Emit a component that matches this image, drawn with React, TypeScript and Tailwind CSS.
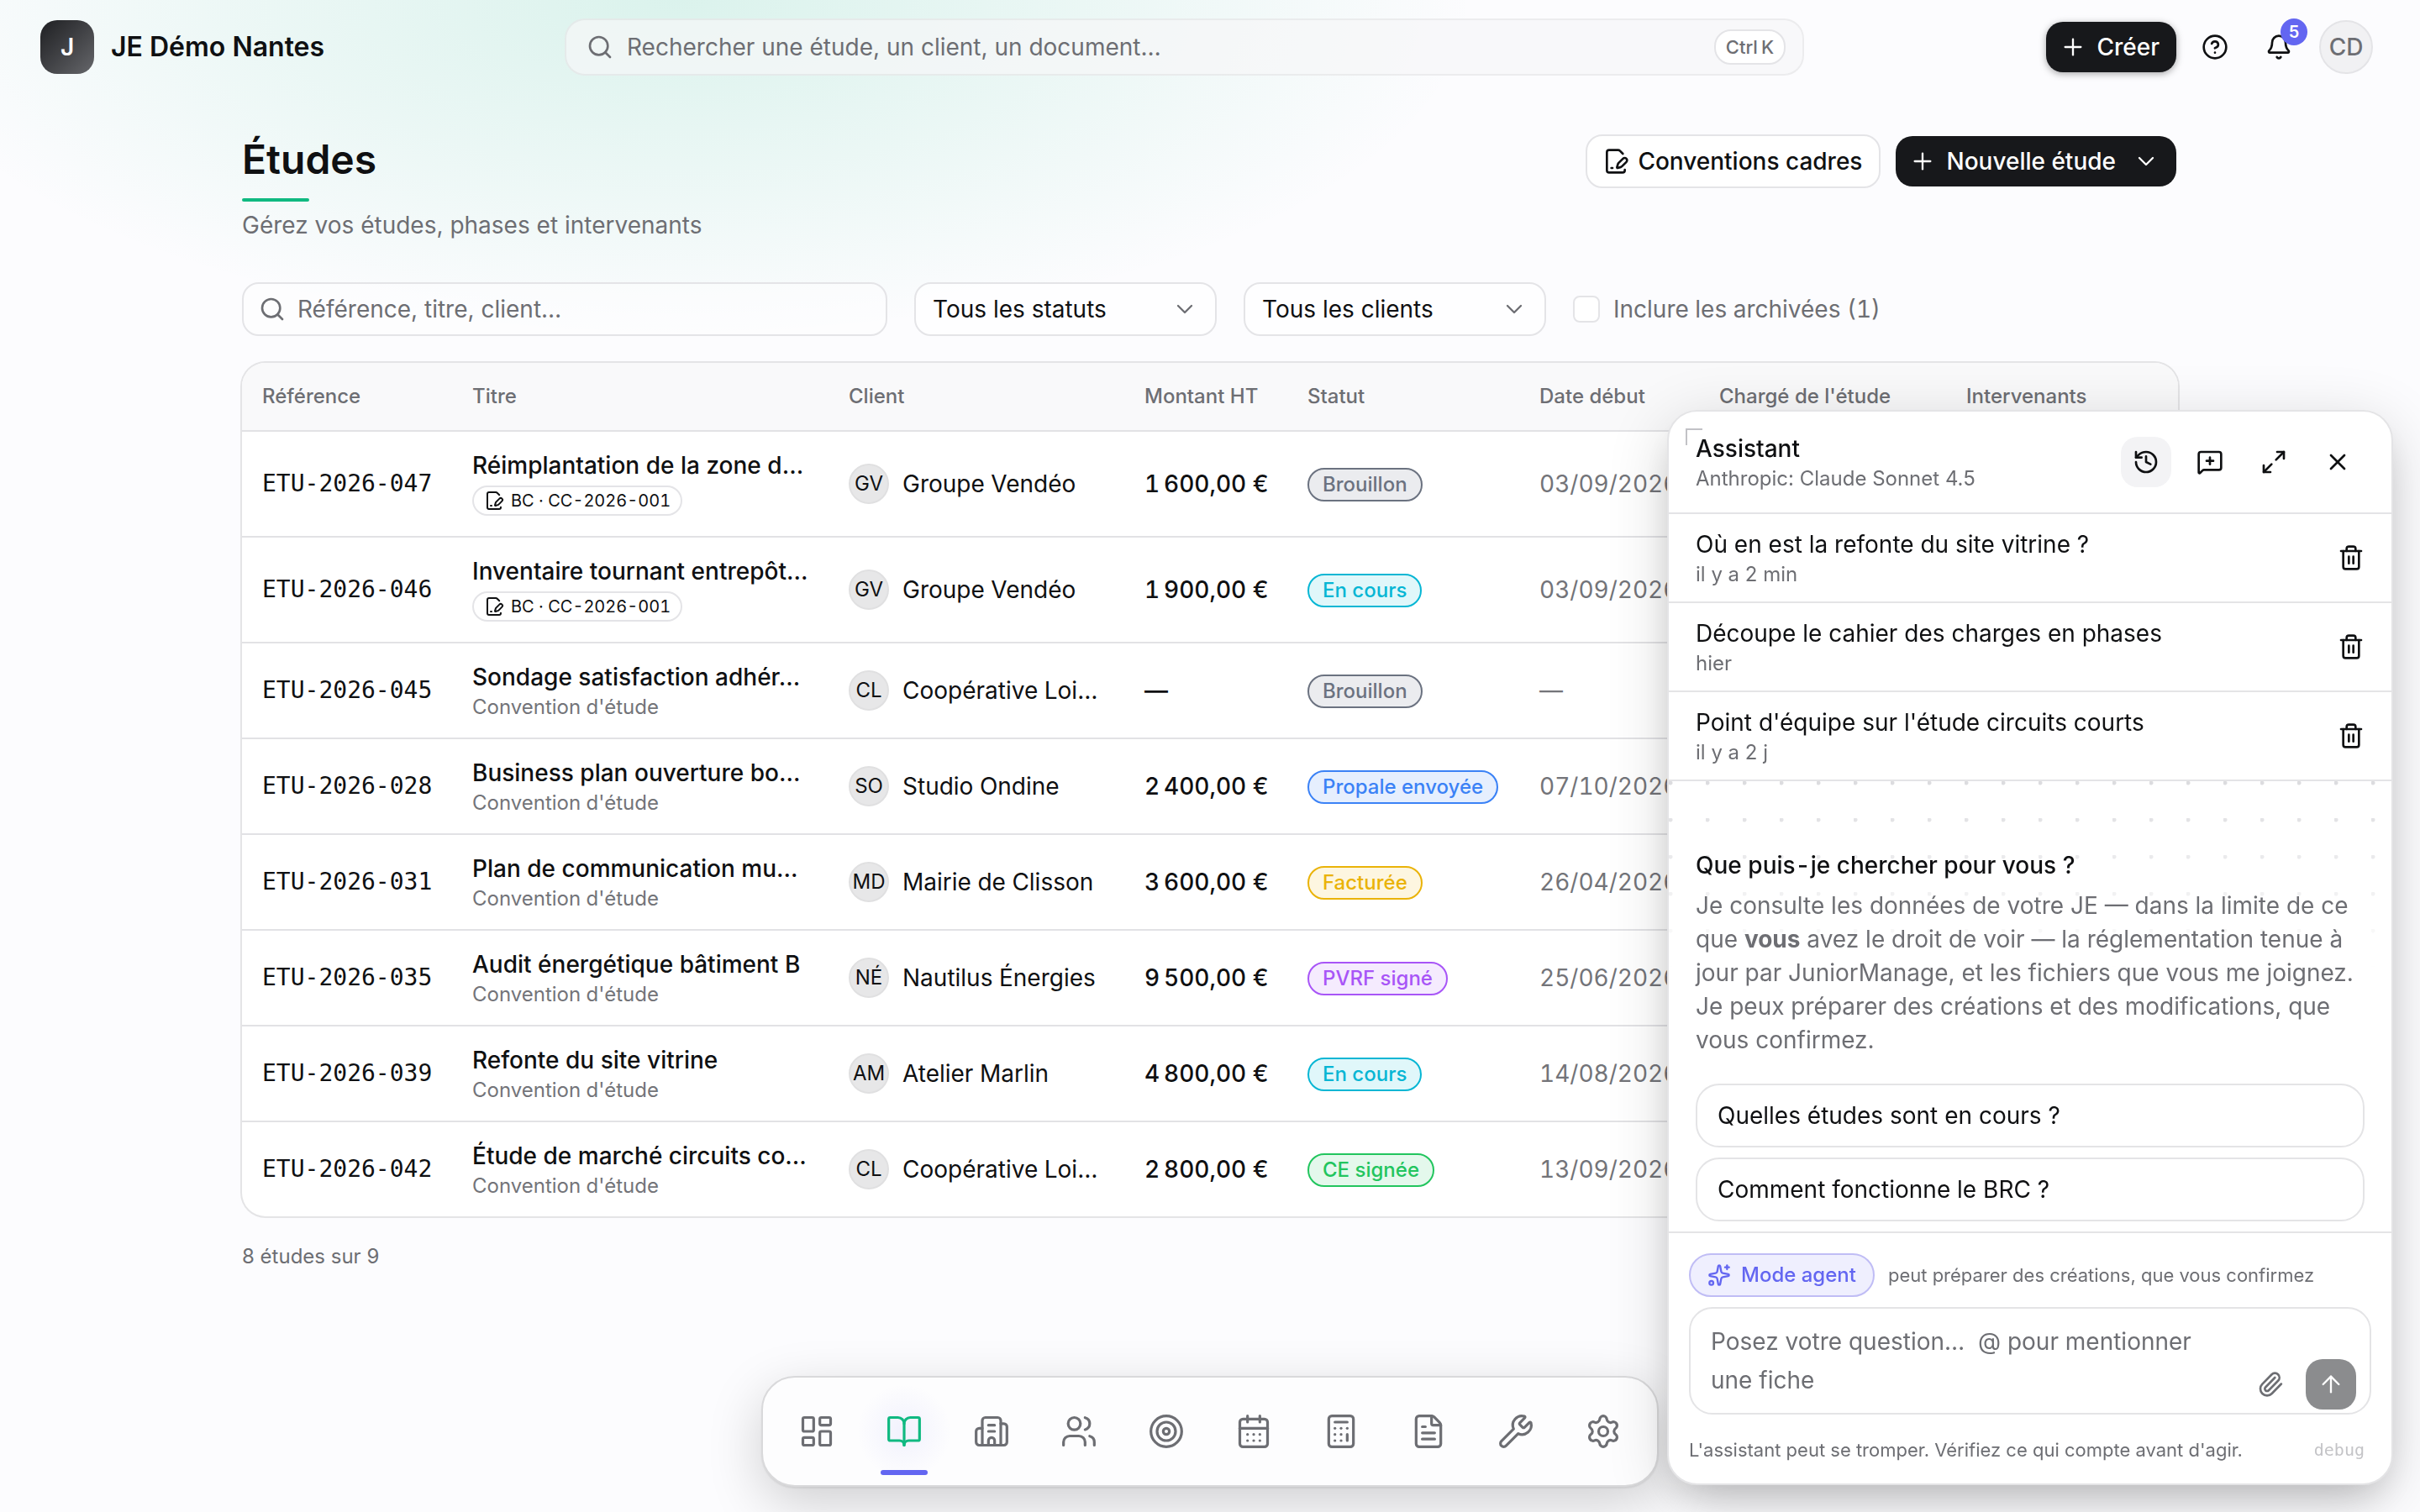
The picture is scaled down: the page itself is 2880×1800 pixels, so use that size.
import { useState } from "react";
import type { ComponentType, ReactNode } from "react";
import {
  ArrowUp,
  Bell,
  BookOpen,
  Building2,
  Calculator,
  CalendarDays,
  ChevronDown,
  CircleQuestionMark,
  FileSignature,
  FileText,
  History,
  LayoutDashboard,
  Maximize2,
  MessageSquarePlus,
  Paperclip,
  Plus,
  Search,
  Settings,
  Sparkles,
  Target,
  Trash2,
  Users,
  Wrench,
  X,
} from "lucide-react";

type Status = "Brouillon" | "En cours" | "Propale envoyée" | "Facturée" | "PVRF signé" | "CE signée";

type Study = {
  ref: string;
  title: string;
  bc?: string;
  initials: string;
  client: string;
  amount: string;
  status: Status;
  date: string;
};

const STATUS_STYLES: Record<Status, string> = {
  Brouillon: "border-[#6b7280] bg-[#ebecef] text-[#6b7280]",
  "En cours": "border-[#06b6d4] bg-[#e0f7fa] text-[#06b6d4]",
  "Propale envoyée": "border-[#3b82f6] bg-[#e6effe] text-[#3b82f6]",
  Facturée: "border-[#eab308] bg-[#fdf6e0] text-[#eab308]",
  "PVRF signé": "border-[#a855f7] bg-[#f5ebfe] text-[#a855f7]",
  "CE signée": "border-[#22c55e] bg-[#e4f8ec] text-[#22c55e]",
};

const STUDIES: Study[] = [
  { ref: "ETU-2026-047", title: "Réimplantation de la zone d…", bc: "BC · CC-2026-001", initials: "GV", client: "Groupe Vendéo", amount: "1\u202f600,00 €", status: "Brouillon", date: "03/09/2026" },
  { ref: "ETU-2026-046", title: "Inventaire tournant entrepôt…", bc: "BC · CC-2026-001", initials: "GV", client: "Groupe Vendéo", amount: "1\u202f900,00 €", status: "En cours", date: "03/09/2026" },
  { ref: "ETU-2026-045", title: "Sondage satisfaction adhér…", initials: "CL", client: "Coopérative Loi…", amount: "—", status: "Brouillon", date: "—" },
  { ref: "ETU-2026-028", title: "Business plan ouverture bo…", initials: "SO", client: "Studio Ondine", amount: "2\u202f400,00 €", status: "Propale envoyée", date: "07/10/2026" },
  { ref: "ETU-2026-031", title: "Plan de communication mu…", initials: "MD", client: "Mairie de Clisson", amount: "3\u202f600,00 €", status: "Facturée", date: "26/04/2026" },
  { ref: "ETU-2026-035", title: "Audit énergétique bâtiment B", initials: "NÉ", client: "Nautilus Énergies", amount: "9\u202f500,00 €", status: "PVRF signé", date: "25/06/2026" },
  { ref: "ETU-2026-039", title: "Refonte du site vitrine", initials: "AM", client: "Atelier Marlin", amount: "4\u202f800,00 €", status: "En cours", date: "14/08/2026" },
  { ref: "ETU-2026-042", title: "Étude de marché circuits co…", initials: "CL", client: "Coopérative Loi…", amount: "2\u202f800,00 €", status: "CE signée", date: "13/09/2026" },
];

const COLUMNS = [
  { label: "Référence", width: "w-[250px]" },
  { label: "Titre", width: "w-[448px]" },
  { label: "Client", width: "w-[352px]" },
  { label: "Montant HT", width: "w-[194px]" },
  { label: "Statut", width: "w-[276px]" },
  { label: "Date début", width: "w-[214px]" },
  { label: "Chargé de l'étude", width: "w-[294px]" },
  { label: "Intervenants", width: "w-[276px]" },
];

const CONVERSATIONS = [
  { title: "Où en est la refonte du site vitrine ?", when: "il y a 2 min" },
  { title: "Découpe le cahier des charges en phases", when: "hier" },
  { title: "Point d'équipe sur l'étude circuits courts", when: "il y a 2 j" },
];

const SUGGESTIONS = ["Quelles études sont en cours ?", "Comment fonctionne le BRC ?"];

const DOCK: { label: string; icon: ComponentType<{ className?: string; strokeWidth?: number }> }[] = [
  { label: "Tableau de bord", icon: LayoutDashboard },
  { label: "Études", icon: BookOpen },
  { label: "Clients", icon: Building2 },
  { label: "Membres", icon: Users },
  { label: "Prospection", icon: Target },
  { label: "Calendrier", icon: CalendarDays },
  { label: "Comptabilité", icon: Calculator },
  { label: "Documents", icon: FileText },
  { label: "Outils", icon: Wrench },
  { label: "Paramètres", icon: Settings },
];

const TopBar = () => (
  <header className="relative flex h-28 items-center pr-14 pl-12">
    <div className="flex w-[624px] shrink-0 items-center gap-5">
      <div className="flex size-16 items-center justify-center rounded-[20px] bg-gradient-to-br from-[#1f2023] to-[#66676b] text-[28px] font-semibold text-white">
        J
      </div>
      <span className="text-[32px] leading-10 font-semibold">JE Démo Nantes</span>
    </div>

    <label className="flex h-[68px] flex-1 items-center gap-4 rounded-[24px] border-2 border-black/5 bg-[#f6f6f8]/70 pr-5 pl-6 text-[#6d6e73]">
      <Search className="size-8 shrink-0" />
      <input
        type="search"
        aria-label="Rechercher"
        placeholder="Rechercher une étude, un client, un document…"
        className="h-10 min-w-0 flex-1 bg-transparent text-[28px] outline-none placeholder:text-[#6d6e73]"
      />
      <kbd className="flex h-[42px] items-center gap-1 rounded-[20px] border-2 border-[#e4e4e7] bg-white px-3 font-[Inter,sans-serif] text-[22px] font-medium">
        <span>Ctrl</span>
        <span>K</span>
      </kbd>
    </label>

    <div className="flex w-[677px] shrink-0 items-center justify-end gap-3">
      <button type="button" className="flex h-[60px] items-center gap-3 rounded-[20px] bg-[#17181b] pr-5 pl-4 text-[28px] font-medium text-white shadow-[0_2px_8px_rgba(0,0,0,0.35)]">
        <Plus className="size-8" strokeWidth={1.75} />
        Créer
      </button>
      <button type="button" aria-label="Aide" className="ml-0.5 flex size-16 items-center justify-center">
        <CircleQuestionMark className="size-8" />
      </button>
      <button type="button" aria-label="Notifications" className="relative flex size-16 items-center justify-center">
        <Bell className="size-8" />
        <span className="absolute -top-0.5 -right-0.5 flex size-8 items-center justify-center rounded-full bg-[#6366f1] text-xl font-semibold text-white">
          5
        </span>
      </button>
      <button type="button" aria-label="Mon compte" className="ml-1 flex size-16 items-center justify-center rounded-full border-2 border-[#e4e4e7] bg-[#f1f1f3] text-[28px] font-medium text-[#6d6e73]">
        CD
      </button>
    </div>
  </header>
);

const FilterSelect = ({ label, value }: { label: string; value: string }) => (
  <div className="relative w-[360px]">
    <select
      aria-label={label}
      className="h-16 w-full appearance-none rounded-[20px] border-2 border-[#e4e4e7] bg-white/70 pr-16 pl-5 text-[28px] outline-none"
    >
      <option>{value}</option>
    </select>
    <ChevronDown className="pointer-events-none absolute top-4 right-[22px] size-8 text-[#6d6e73]" strokeWidth={1.75} />
  </div>
);

const Filters = () => (
  <div className="mt-12 flex items-center gap-8">
    <label className="flex h-16 w-[768px] items-center gap-3.5 rounded-[20px] border-2 border-[#e4e4e7] bg-white/40 px-[18px] text-[#6d6e73]">
      <Search className="size-8 shrink-0" />
      <input
        type="search"
        aria-label="Filtrer les études"
        placeholder="Référence, titre, client…"
        className="h-10 min-w-0 flex-1 bg-transparent text-[28px] outline-none placeholder:text-[#6d6e73]"
      />
    </label>
    <FilterSelect label="Statut" value="Tous les statuts" />
    <FilterSelect label="Client" value="Tous les clients" />
    <label className="flex items-center gap-4 text-[28px] leading-10 text-[#6d6e73] tabular-nums">
      <input type="checkbox" className="size-8 appearance-none rounded-lg border-2 border-[#e4e4e7] bg-white checked:bg-[#17181b]" />
      Inclure les archivées (1)
    </label>
  </div>
);

const StudiesTable = () => (
  <div className="mt-8 overflow-hidden rounded-[28px] bg-white ring-2 ring-[#e4e4e6]">
    <table className="w-full table-fixed text-left text-[28px] leading-10 tabular-nums">
      <thead className="bg-[#f9f9fa]">
        <tr className="h-[81px] border-b-2 border-[#e2e2e5]">
          {COLUMNS.map((col) => (
            <th key={col.label} scope="col" className={`${col.width} px-6 text-2xl font-medium text-[#6d6e73]`}>
              {col.label}
            </th>
          ))}
        </tr>
      </thead>
      <tbody>
        {STUDIES.map((study) => (
          <tr key={study.ref} className="border-b-2 border-[#e2e2e5] last:border-b-0">
            <td className="px-6 font-['DejaVu_Sans_Mono',monospace] font-medium whitespace-nowrap">{study.ref}</td>
            <td className="px-6 py-5 whitespace-nowrap">
              <a href="#" className="block font-medium">
                {study.title}
              </a>
              {study.bc ? (
                <div className="flex h-11 items-center">
                  <span className="flex h-9 items-center gap-2 rounded-full border-2 border-[#e4e4e7] px-3 text-xl">
                    <FileSignature className="size-6" />
                    {study.bc}
                  </span>
                </div>
              ) : (
                <div className="text-2xl leading-8 text-[#737479]">Convention d'étude</div>
              )}
            </td>
            <td className="px-6">
              <div className="flex items-center gap-4 whitespace-nowrap">
                <span className="flex size-12 shrink-0 items-center justify-center rounded-full border-2 border-[#e0e0e1] bg-[#e7e7e8] text-2xl">
                  {study.initials}
                </span>
                {study.client}
              </div>
            </td>
            <td className="px-6 font-medium whitespace-nowrap">{study.amount}</td>
            <td className="px-6">
              <span className={`inline-flex h-10 items-center rounded-full border-2 px-4 align-middle text-2xl font-medium whitespace-nowrap ${STATUS_STYLES[study.status]}`}>
                {study.status}
              </span>
            </td>
            <td className="px-6 text-[#737479]">{study.date}</td>
            <td className="px-6" />
            <td className="px-6" />
          </tr>
        ))}
      </tbody>
    </table>
  </div>
);

const Dock = () => (
  <nav
    aria-label="Navigation principale"
    className="fixed bottom-[30px] left-1/2 flex -translate-x-1/2 gap-2 rounded-[40px] border-2 border-[#d9d9db] bg-[#fdfdfe] p-4 shadow-[0_2px_2px_rgba(0,0,0,0.08),0_20px_64px_rgba(0,0,0,0.18)]"
  >
    {DOCK.map(({ label, icon: Icon }) => {
      const active = label === "Études";
      return (
        <a
          key={label}
          href="#"
          aria-label={label}
          className={`relative flex size-24 items-center justify-center ${active ? "text-[#10b981]" : "text-[#6d6e73]"}`}
        >
          {active && (
            <>
              <span className="absolute -inset-2 bg-[radial-gradient(closest-side,rgba(99,102,241,0.08),transparent)]" />
              <span className="absolute -bottom-1 left-5 h-1.5 w-14 rounded-full bg-[#6366f1]" />
            </>
          )}
          <Icon className="relative size-11" strokeWidth={1.75} />
        </a>
      );
    })}
  </nav>
);

const IconButton = ({ label, active, children }: { label: string; active?: boolean; children: ReactNode }) => (
  <button
    type="button"
    aria-label={label}
    className={`flex size-[60px] items-center justify-center rounded-[20px] ${active ? "bg-[#f3f3f5]" : ""}`}
  >
    {children}
  </button>
);

const Assistant = () => {
  const [message, setMessage] = useState("");

  return (
    <aside
      aria-label="Assistant"
      className="fixed right-8 bottom-8 flex h-[1280px] w-[864px] flex-col overflow-hidden rounded-[36px] border-2 border-[#e4e4e6] bg-white text-[28px] leading-10 shadow-[0_24px_48px_-16px_rgba(0,0,0,0.2),0_16px_72px_rgba(0,0,0,0.16)]"
    >
      <div className="relative flex h-[122px] shrink-0 items-center justify-between border-b-2 border-[#e4e4e6] pr-[34px] pl-8">
        <span className="absolute top-5 left-5 size-5 border-t-2 border-l-2 border-[#c2c2c6]" />
        <div>
          <h2 className="font-medium">Assistant</h2>
          <p className="text-2xl leading-8 text-[#6d6e73]">Anthropic: Claude Sonnet 4.5</p>
        </div>
        <div className="flex gap-4">
          <IconButton label="Historique" active>
            <History className="size-8" />
          </IconButton>
          <IconButton label="Nouvelle conversation">
            <MessageSquarePlus className="size-8" />
          </IconButton>
          <IconButton label="Agrandir">
            <Maximize2 className="size-8" />
          </IconButton>
          <IconButton label="Fermer">
            <X className="size-8" />
          </IconButton>
        </div>
      </div>

      <ul className="shrink-0">
        {CONVERSATIONS.map((conv) => (
          <li key={conv.title} className="flex items-center justify-between border-b-2 border-[#e4e4e6] px-8 py-4">
            <div>
              <div>{conv.title}</div>
              <div className="text-2xl leading-8 text-[#6d6e73]">{conv.when}</div>
            </div>
            <button type="button" aria-label="Supprimer la conversation">
              <Trash2 className="size-8" />
            </button>
          </li>
        ))}
      </ul>

      <div className="relative min-h-0 flex-1 px-8 pt-20">
        <div className="absolute inset-x-0 top-0 h-56 bg-[radial-gradient(circle_at_2px_2px,#dcdcdf_2px,transparent_3px)] mask-b-from-0% mask-b-to-100% bg-size-[44px_44px]" />
        <div className="relative">
          <h3 className="font-medium tabular-nums">Que puis-je chercher pour vous ?</h3>
          <p className="mt-2 text-[#6d6e73]">
            Je consulte les données de votre JE — dans la limite de ce que <strong className="font-bold">vous</strong> avez
            le droit de voir — la réglementation tenue à jour par JuniorManage, et les fichiers que vous me joignez. Je
            peux préparer des créations et des modifications, que vous confirmez.
          </p>
          <div className="mt-8 flex flex-col gap-3">
            {SUGGESTIONS.map((text) => (
              <button key={text} type="button" className="rounded-[28px] border-2 border-[#e4e4e6] bg-white px-6 py-4 text-left">
                {text}
              </button>
            ))}
          </div>
        </div>
      </div>

      <div className="shrink-0 border-t-2 border-[#e4e4e6] px-6 py-6">
        <div className="flex items-center gap-4">
          <button type="button" className="flex h-[52px] items-center gap-3 rounded-full border-2 border-[#c0bdf5] bg-[#efeffe] px-5 text-2xl font-medium text-[#6366f1]">
            <Sparkles className="size-7" />
            Mode agent
          </button>
          <span className="text-[22px] leading-8 text-[#6d6e73]">peut préparer des créations, que vous confirmez</span>
        </div>

        <div className="mt-3 flex h-32 items-end rounded-[28px] border-2 border-[#e4e4e6] pr-4 pb-1">
          <textarea
            aria-label="Votre question"
            value={message}
            onChange={(e) => setMessage(e.target.value)}
            placeholder="Posez votre question…  @ pour mentionner une fiche"
            className="h-full min-w-0 flex-1 resize-none bg-transparent px-6 pt-4 leading-[46px] outline-none placeholder:text-[#6d6e73]"
          />
          <button type="button" aria-label="Joindre un fichier" className="mr-3 flex size-[60px] items-center justify-center text-[#6d6e73]">
            <Paperclip className="size-8" />
          </button>
          <button type="submit" aria-label="Envoyer" className="flex size-[60px] items-center justify-center rounded-[20px] bg-[#8b8c8e] text-white">
            <ArrowUp className="size-8" strokeWidth={1.75} />
          </button>
        </div>

        <div className="mt-[26px] flex h-8 items-center justify-between pr-2 leading-8">
          <p className="text-[22px] text-[#6d6e73]">L'assistant peut se tromper. Vérifiez ce qui compte avant d'agir.</p>
          <button type="button" className="font-['DejaVu_Sans_Mono',monospace] text-xl text-[#c4c4c7]">
            debug
          </button>
        </div>
      </div>
    </aside>
  );
};

const App = () => (
  <div className="relative min-h-screen bg-[#fcfcfe] font-[Inter,sans-serif] text-[#0f1012]">
    <div className="pointer-events-none absolute inset-x-0 top-0 h-[500px] bg-[radial-gradient(33%_400px_at_28%_0px,rgba(16,185,129,0.14),rgba(16,185,129,0.07)_52%,transparent)]" />
    <TopBar />

    <main className="relative mx-auto max-w-[2304px] pt-12">
      <div className="flex items-start justify-between">
        <div>
          <h1 className="text-5xl leading-[60px] font-semibold">Études</h1>
          <div className="mt-4 h-1 w-20 rounded-full bg-[#10b981]" />
          <p className="mt-2 text-[28px] leading-10 text-[#6d6e73]">Gérez vos études, phases et intervenants</p>
        </div>
        <div className="flex items-center gap-[18px] pr-0.5 text-[28px] font-medium">
          <button type="button" className="flex h-16 items-center gap-2.5 rounded-[20px] border-2 border-[#e4e4e7] bg-white pr-5 pl-[18px]">
            <FileSignature className="size-8" />
            Conventions cadres
          </button>
          <button type="button" className="flex h-[60px] items-center gap-3 rounded-[20px] bg-[#17181b] pr-5 pl-4 text-white">
            <Plus className="size-8" strokeWidth={1.75} />
            Nouvelle étude
            <ChevronDown className="ml-2 size-8" strokeWidth={1.75} />
          </button>
        </div>
      </div>

      <Filters />
      <StudiesTable />
      <p className="mt-8 text-2xl leading-8 text-[#6d6e73]">8 études sur 9</p>
    </main>

    <Dock />
    <Assistant />
  </div>
);

export default App;
